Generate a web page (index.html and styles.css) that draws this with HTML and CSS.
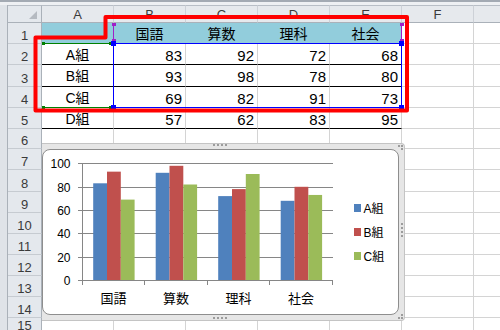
FILE: index.html
```html
<!DOCTYPE html>
<html lang="ja">
<head>
<meta charset="utf-8">
<title>Excel グラフ</title>
<link rel="stylesheet" href="styles.css">
</head>
<body>
<div class="window">
  <div class="topbar"></div>
  <div class="main">
    <div class="leftstrip"></div>
    <div class="sheet">
      <div class="corner"><span class="tri"></span></div>
      <div class="ch">A</div><div class="ch">B</div><div class="ch">C</div><div class="ch">D</div><div class="ch">E</div><div class="ch">F</div><div class="ch"></div>

      <div class="rh">1</div>
      <div class="c hd"></div><div class="c hd">国語</div><div class="c hd">算数</div><div class="c hd">理科</div><div class="c hd last">社会</div><div class="c"></div><div class="c"></div>

      <div class="rh">2</div>
      <div class="c t name">A組</div><div class="c t num">83</div><div class="c t num">92</div><div class="c t num">72</div><div class="c t num">68</div><div class="c"></div><div class="c"></div>

      <div class="rh">3</div>
      <div class="c t name">B組</div><div class="c t num">93</div><div class="c t num">98</div><div class="c t num">78</div><div class="c t num">80</div><div class="c"></div><div class="c"></div>

      <div class="rh">4</div>
      <div class="c t name">C組</div><div class="c t num">69</div><div class="c t num">82</div><div class="c t num">91</div><div class="c t num">73</div><div class="c"></div><div class="c"></div>

      <div class="rh">5</div>
      <div class="c t name">D組</div><div class="c t num">57</div><div class="c t num">62</div><div class="c t num">83</div><div class="c t num">95</div><div class="c"></div><div class="c"></div>

      <div class="rh">6</div><div class="c"></div><div class="c"></div><div class="c"></div><div class="c"></div><div class="c"></div><div class="c"></div><div class="c"></div>
      <div class="rh">7</div><div class="c"></div><div class="c"></div><div class="c"></div><div class="c"></div><div class="c"></div><div class="c"></div><div class="c"></div>
      <div class="rh">8</div><div class="c"></div><div class="c"></div><div class="c"></div><div class="c"></div><div class="c"></div><div class="c"></div><div class="c"></div>
      <div class="rh">9</div><div class="c"></div><div class="c"></div><div class="c"></div><div class="c"></div><div class="c"></div><div class="c"></div><div class="c"></div>
      <div class="rh">10</div><div class="c"></div><div class="c"></div><div class="c"></div><div class="c"></div><div class="c"></div><div class="c"></div><div class="c"></div>
      <div class="rh">11</div><div class="c"></div><div class="c"></div><div class="c"></div><div class="c"></div><div class="c"></div><div class="c"></div><div class="c"></div>
      <div class="rh">12</div><div class="c"></div><div class="c"></div><div class="c"></div><div class="c"></div><div class="c"></div><div class="c"></div><div class="c"></div>
      <div class="rh">13</div><div class="c"></div><div class="c"></div><div class="c"></div><div class="c"></div><div class="c"></div><div class="c"></div><div class="c"></div>
      <div class="rh">14</div><div class="c"></div><div class="c"></div><div class="c"></div><div class="c"></div><div class="c"></div><div class="c"></div><div class="c"></div>
      <div class="rh">15</div><div class="c"></div><div class="c"></div><div class="c"></div><div class="c"></div><div class="c"></div><div class="c"></div><div class="c"></div>
    </div>
  </div>

  <svg class="marks" width="500" height="330" viewBox="0 0 500 330">
    <g fill="none" stroke-width="1">
      <line x1="42" y1="43.5" x2="113" y2="43.5" stroke="#008000"/>
      <line x1="42" y1="107.5" x2="113" y2="107.5" stroke="#008000"/>
      <line x1="113.5" y1="23" x2="113.5" y2="43" stroke="#a020c8"/>
      <line x1="401.5" y1="23" x2="401.5" y2="43" stroke="#a020c8"/>
      <rect x="113.5" y="43.5" width="288" height="64" stroke="#0000ff"/>
    </g>
    <g fill="#a020c8">
      <rect x="112" y="23" width="4" height="3"/>
      <rect x="112" y="39" width="4" height="3"/>
      <rect x="400" y="23" width="4" height="3"/>
      <rect x="400" y="39" width="4" height="3"/>
    </g>
    <g fill="#008000">
      <rect x="42" y="42" width="3" height="3"/>
      <rect x="109" y="42" width="3" height="3"/>
      <rect x="42" y="106" width="3" height="3"/>
      <rect x="109" y="106" width="3" height="3"/>
    </g>
    <g fill="#0000ff">
      <rect x="111" y="41" width="5" height="5"/>
      <rect x="399" y="41" width="5" height="5"/>
      <rect x="111" y="105" width="5" height="5"/>
      <rect x="399" y="105" width="5" height="5"/>
    </g>
    <polygon points="35.5,37.5 105.5,37.5 105.5,17 407,17 407,110.5 35.5,110.5" fill="none" stroke="#ff0000" stroke-width="4" stroke-linejoin="round"/>
  </svg>

  <div class="chart">
    <div class="plot-box">
      <svg class="plot" width="355" height="164" viewBox="43 150 355 164">
        <g stroke="#868686" stroke-width="1">
          <line x1="82" y1="163.5" x2="333" y2="163.5"/>
          <line x1="82" y1="187.5" x2="333" y2="187.5"/>
          <line x1="82" y1="210.5" x2="333" y2="210.5"/>
          <line x1="82" y1="233.5" x2="333" y2="233.5"/>
          <line x1="82" y1="257.5" x2="333" y2="257.5"/>
        </g>
        <g>
          <rect x="93.2" y="183.3" width="13.8" height="96.7" fill="#4f81bd"/>
          <rect x="107" y="171.65" width="13.8" height="108.35" fill="#c0504d"/>
          <rect x="120.8" y="199.6" width="13.8" height="80.4" fill="#9bbb59"/>

          <rect x="155.7" y="172.8" width="13.8" height="107.2" fill="#4f81bd"/>
          <rect x="169.5" y="165.8" width="13.8" height="114.2" fill="#c0504d"/>
          <rect x="183.3" y="184.5" width="13.8" height="95.5" fill="#9bbb59"/>

          <rect x="218.2" y="196.1" width="13.8" height="83.9" fill="#4f81bd"/>
          <rect x="232" y="189.1" width="13.8" height="90.9" fill="#c0504d"/>
          <rect x="245.8" y="174" width="13.8" height="106" fill="#9bbb59"/>

          <rect x="280.7" y="200.8" width="13.8" height="79.2" fill="#4f81bd"/>
          <rect x="294.5" y="186.8" width="13.8" height="93.2" fill="#c0504d"/>
          <rect x="308.3" y="194.95" width="13.8" height="85.05" fill="#9bbb59"/>
        </g>
        <g stroke="#868686" stroke-width="1">
          <line x1="82.5" y1="163" x2="82.5" y2="285"/>
          <line x1="82" y1="280.5" x2="333" y2="280.5"/>
          <line x1="78" y1="163.5" x2="82" y2="163.5"/>
          <line x1="78" y1="187.5" x2="82" y2="187.5"/>
          <line x1="78" y1="210.5" x2="82" y2="210.5"/>
          <line x1="78" y1="233.5" x2="82" y2="233.5"/>
          <line x1="78" y1="257.5" x2="82" y2="257.5"/>
          <line x1="78" y1="280.5" x2="82" y2="280.5"/>
          <line x1="144.5" y1="280" x2="144.5" y2="285"/>
          <line x1="207.5" y1="280" x2="207.5" y2="285"/>
          <line x1="269.5" y1="280" x2="269.5" y2="285"/>
          <line x1="332.5" y1="280" x2="332.5" y2="285"/>
        </g>
        <g class="ylab" text-anchor="end">
          <text x="70.5" y="167.8">100</text>
          <text x="70.5" y="191.8">80</text>
          <text x="70.5" y="214.8">60</text>
          <text x="70.5" y="237.8">40</text>
          <text x="70.5" y="261.8">20</text>
          <text x="70.5" y="284.8">0</text>
        </g>
        <g class="xlab" text-anchor="middle">
          <text x="113.5" y="302.5">国語</text>
          <text x="176" y="302.5">算数</text>
          <text x="238.5" y="302.5">理科</text>
          <text x="301" y="302.5">社会</text>
        </g>
        <g class="legend">
          <rect x="354" y="204" width="7" height="8" fill="#4f81bd"/>
          <rect x="354" y="228" width="7" height="8" fill="#c0504d"/>
          <rect x="354" y="252" width="7" height="8" fill="#9bbb59"/>
          <text x="363.5" y="212.5">A組</text>
          <text x="363.5" y="236.5">B組</text>
          <text x="363.5" y="260.5">C組</text>
        </g>
      </svg>
    </div>
    <span class="grip grip-top"></span>
    <span class="grip grip-bottom"></span>
    <span class="grip grip-right"></span>
    <span class="grip grip-tr"></span>
    <span class="grip grip-br"></span>
  </div>
</div>
</body>
</html>
```

FILE: styles.css
```css
* {
  box-sizing: border-box;
  margin: 0;
  padding: 0;
}

html,
body {
  width: 500px;
  height: 330px;
  overflow: hidden;
  background: #ffffff;
}

body {
  font-family: "Liberation Sans", "Noto Sans CJK JP", sans-serif;
  color: #000000;
}

.window {
  position: relative;
  width: 500px;
  height: 330px;
  overflow: hidden;
  background: #ffffff;
}

.topbar {
  height: 5px;
  border-top: 2px solid #a3aab3;
  background: #eef0f3;
}

.main {
  display: flex;
}

.leftstrip {
  flex: 0 0 8px;
  height: 325px;
  background: #dfe3e8;
  border-right: 1px solid #aab1b9;
}

.sheet {
  flex: none;
  display: grid;
  grid-template-columns: 34px repeat(7, 72px);
  grid-template-rows: 18px 21px 21px 22px 21px 21px 20px 21px 22px 21px 21px 21px 21px 21px 21px;
}

.corner {
  background: #e4e8ed;
  border-top: 1px solid #b8bec6;
  border-right: 1px solid #aab1b9;
  border-bottom: 1px solid #aab1b9;
  display: flex;
  align-items: flex-end;
  justify-content: flex-end;
  padding: 0 4px 3px 0;
}

.tri {
  width: 8px;
  height: 8px;
  background: #b5bac1;
  clip-path: polygon(100% 0, 100% 100%, 0 100%);
}

.ch {
  background: #e6e9ed;
  border-top: 1px solid #b8bec6;
  border-right: 1px solid #cdd1d7;
  border-bottom: 1px solid #aab1b9;
  display: flex;
  align-items: center;
  justify-content: center;
  font-size: 13px;
  line-height: 15px;
  color: #3a3a3a;
}

.rh {
  background: #e4e8ed;
  border-right: 1px solid #aab1b9;
  border-bottom: 1px solid #c6cbd1;
  display: flex;
  align-items: flex-end;
  justify-content: center;
  font-size: 13px;
  line-height: 15px;
  color: #3a3a3a;
}

.c {
  border-right: 1px solid #d4d4d4;
  border-bottom: 1px solid #d4d4d4;
  display: flex;
  align-items: center;
  padding-top: 2px;
  font-size: 15px;
  line-height: 17px;
  white-space: nowrap;
}

.hd {
  background: #92cddc;
  border-right-color: #92cddc;
  border-bottom-color: #000000;
  justify-content: center;
  font-size: 14px;
}

.hd.last {
  border-right-color: #d4d4d4;
}

.t {
  border-bottom-color: #000000;
}

.name {
  justify-content: center;
  font-size: 14px;
}

.num {
  justify-content: flex-end;
  padding-right: 3px;
}

.marks {
  position: absolute;
  left: 0;
  top: 0;
  pointer-events: none;
}

.chart {
  position: absolute;
  left: 42px;
  top: 143px;
  width: 363px;
  height: 178px;
  padding: 5px 5px 5px 0;
  background: #e6e6e6;
  border: 1px solid #c4c4c4;
  border-left: none;
  border-radius: 0 4px 4px 0;
}

.plot-box {
  width: 100%;
  height: 100%;
  background: #ffffff;
  border: 1px solid #8e8e8e;
  border-radius: 8px;
  overflow: hidden;
}

.plot {
  display: block;
}

.ylab text {
  font-family: "Liberation Sans", sans-serif;
  font-size: 12px;
  fill: #000000;
}

.xlab text {
  font-family: "Liberation Sans", "Noto Sans CJK JP", sans-serif;
  font-size: 13px;
  fill: #000000;
}

.legend text {
  font-family: "Liberation Sans", "Noto Sans CJK JP", sans-serif;
  font-size: 12px;
  fill: #000000;
}

.grip {
  position: absolute;
  display: block;
}

.grip-top {
  left: 171px;
  top: 0;
  width: 14px;
  height: 2px;
  background: repeating-linear-gradient(90deg, #9c9c9c 0 2px, transparent 2px 4px);
}

.grip-bottom {
  left: 171px;
  bottom: 1px;
  width: 14px;
  height: 2px;
  background: repeating-linear-gradient(90deg, #9c9c9c 0 2px, transparent 2px 4px);
}

.grip-right {
  right: 1px;
  top: 79px;
  width: 2px;
  height: 14px;
  background: repeating-linear-gradient(180deg, #9c9c9c 0 2px, transparent 2px 4px);
}

.grip-tr {
  right: 1px;
  top: 1px;
  width: 2px;
  height: 2px;
  background: #9c9c9c;
  box-shadow: -3px 0 #9c9c9c, 0 3px #9c9c9c;
}

.grip-br {
  right: 1px;
  bottom: 1px;
  width: 2px;
  height: 2px;
  background: #9c9c9c;
  box-shadow: -3px 0 #9c9c9c, 0 -3px #9c9c9c;
}
```
